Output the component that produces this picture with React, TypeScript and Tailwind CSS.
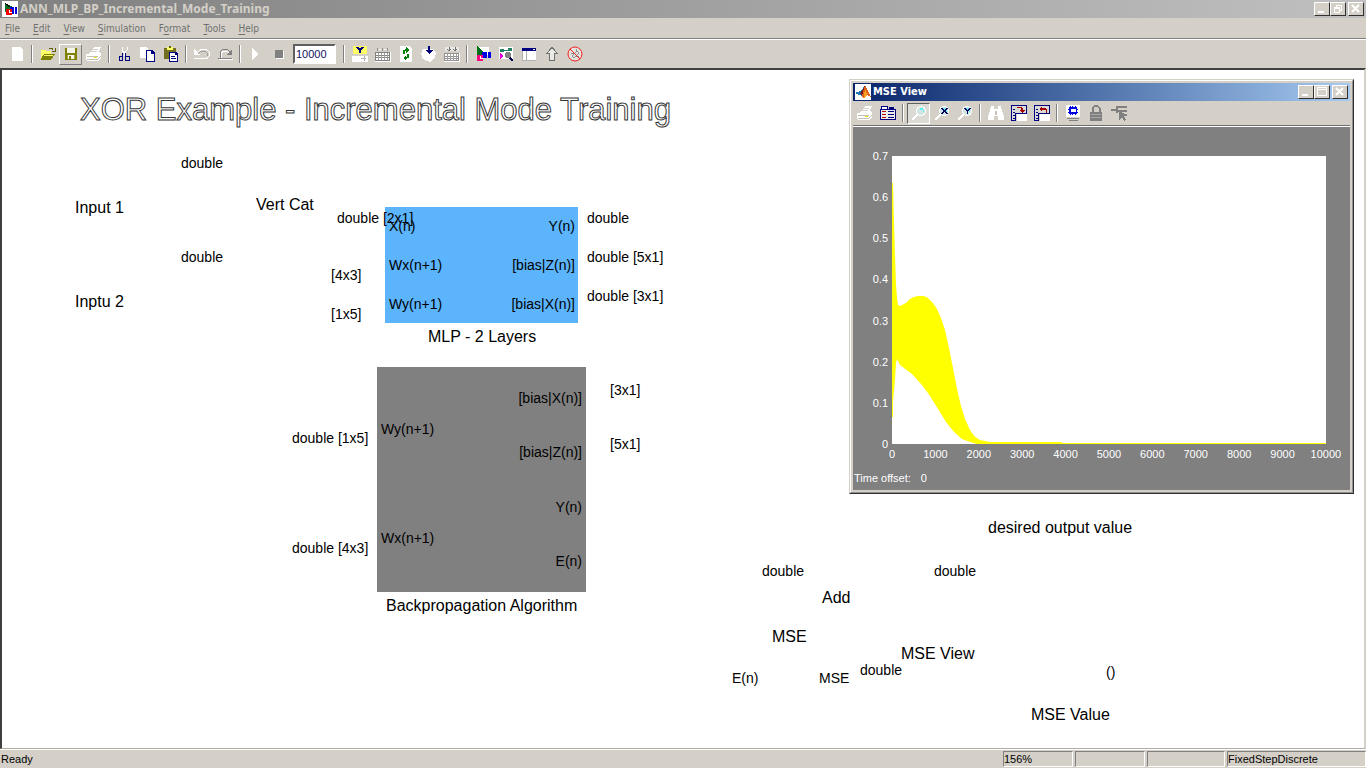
import React from "react";

type Glyph = { label: string; art: React.ReactNode; box?: string };

const plain = "border-transparent";
const raised = "border-t-white border-l-white border-r-[#808080] border-b-[#808080]";
const pressed = "border-t-[#606060] border-l-[#606060] border-r-white border-b-white bg-[#dcdad4]";

function Pix({ children }: { children: React.ReactNode }) {
  return (
    <svg viewBox="0 0 16 16" className="block h-4 w-4 shrink-0" shapeRendering="crispEdges" fill="none" aria-hidden="true">
      {children}
    </svg>
  );
}

function Tool({ label, art, box }: Glyph) {
  return (
    <button
      type="button"
      aria-label={label}
      className={"flex h-[21px] w-[23px] shrink-0 items-center justify-center border " + (box ?? plain)}
    >
      <Pix>{art}</Pix>
    </button>
  );
}

function Sep({ wide }: { wide?: boolean }) {
  return (
    <span className={"flex h-[18px] shrink-0 justify-center " + (wide ? "w-3 pl-1" : "w-2")}>
      <span className="w-px bg-[#808080]" />
      <span className="w-px bg-white" />
    </span>
  );
}

const printer = (
  <>
    <path d="M5 7l3-6h7l-3 6z" fill="#fff" />
    <path d="M7 3h5M6 5h5" stroke="#d4d0c8" />
    <path d="M0 8h3l1-2h9l2 1v5l-3 3H1l-1-2z" fill="#fff" />
    <path d="M1 10h11M1 13h11l3-3" stroke="#c4c0b8" />
    <path d="M8 11h3" stroke="#e8e800" />
  </>
);

const newPage = <path d="M3 1h8l3 3v11H3z" fill="#fff" />;
const openFolder = (
  <>
    <path d="M1 4h4l1 1h5v3H4l-3 5z" fill="#ffff66" />
    <path d="M1 13l3-5h11l-4 6H1z" fill="#808000" />
    <path d="M4 9h9" stroke="#ffff66" />
    <path d="M9 2h3l1 2M15 2v3h-3" stroke="#606000" />
  </>
);
const floppy = (
  <>
    <path d="M2 2h12v12H2z" fill="#f4f4e8" />
    <path d="M2 2h2v12H2zM12 2h2v12h-2zM4 7h8v2H4zM4 13h8v1H4zM6 10h2v3H6z" fill="#808000" />
    <path d="M4 9h1v4H4zM11 9h1v4h-1z" fill="#a8a840" />
  </>
);
const scissors = (
  <>
    <path d="M5 1v3l3 4M10 1v3L7 8" stroke="#fff" />
    <path d="M7 8h2v2H7z" fill="#fff" />
    <path d="M5 7h1v8H2v-5h3zM3 11v3h2v-3zM8 7h1v3h4v5H8zM9 11v3h3v-3z" fill="#000080" fillRule="evenodd" />
  </>
);
const copy = (
  <>
    <path d="M0 1h6l2 2v9H0z" fill="#fff" />
    <path d="M6 4h6l3 3v9H6z" fill="#000080" />
    <path d="M7 5h4v3h3v7H7z" fill="#fff" />
  </>
);
const paste = (
  <>
    <path d="M1 2h12v11H1z" fill="#707020" />
    <path d="M4 1h6v3H4z" fill="#ffff66" />
    <path d="M6 0h2v2H6z" fill="#606000" />
    <path d="M6 6h7l2 2v8H6z" fill="#000080" />
    <path d="M7 7h5v2h2v6H7z" fill="#fff" />
    <path d="M8 10h4v1H8zM8 12h5v1H8z" fill="#000080" />
  </>
);
const undo = (
  <>
    <path d="M2 8l3-3 3-2h4l3 3v4l-2 2" stroke="#fff" />
    <path d="M0 3v6h6z" fill="#fff" />
    <path d="M4 8l3-3h4l2 2v3" stroke="#a0a0a0" />
    <path d="M0 12h14v1H0z" fill="#fff" />
  </>
);
const redo = (
  <>
    <path d="M3 12V6l3-3h4l4 4" stroke="#808080" />
    <path d="M4 13V7l3-2h3l3 3" stroke="#fff" />
    <path d="M15 3v6H9z" fill="#808080" />
    <path d="M1 12h14v1H1z" fill="#808080" />
    <path d="M2 13h14v1H2z" fill="#fff" />
  </>
);
const play = <path d="M4 2l7 6-7 6z" fill="#fff" />;
const stop = (
  <>
    <path d="M5 5h8v8H5z" fill="#fff" />
    <path d="M4 4h8v8H4z" fill="#808080" />
  </>
);
const branchY = (
  <>
    <path d="M1 0h14v8H1z" fill="#ffff66" />
    <path d="M4 1h3v1h2V1h3v1h-1v1h-1v1H9v3H7V4H6V3H5V2H4z" fill="#000080" />
    <path d="M0 10h16v6H0z" fill="#fff" />
    <path d="M9 12h5v1H9zM12 10h1v5h-1z" fill="#b0b0b0" />
  </>
);
const grid = (
  <>
    <path d="M0 6h16v10H0z" fill="#fff" />
    <path d="M0 6h15v1H0zM0 9h15v1H0zM0 11h15v1H0zM0 14h15v1H0zM0 6h1v9H0zM14 6h1v9h-1z" fill="#808080" />
    <path d="M3 7h1v7H3zM6 7h1v7H6zM9 7h1v7H9zM12 7h1v7h-1z" fill="#a0a0a0" />
    <path d="M2 2h1v3H2zM7 2h1v3H7zM12 2h1v3h-1z" fill="#909090" />
    <path d="M4 3h2v1H4zM9 3h2v1H9z" fill="#fff" />
  </>
);
const refresh = (
  <>
    <path d="M2 0h9l3 3v13H2z" fill="#fff" />
    <path d="M5 4h2v4H5zM7 3h2v2H7zM9 8h2v4H9zM7 11h2v2H7z" fill="#008000" />
    <path d="M8 1l3 3-3 3zM8 9l-3 3 3 3z" fill="#008000" />
  </>
);
const download = (
  <>
    <path d="M2 3h9l4 4-1 5-5 4-7-3-2-5z" fill="#fff" />
    <path d="M7 0h2v5H7z" fill="#000080" />
    <path d="M4 4h8l-4 4z" fill="#000080" />
  </>
);
const gridDown = (
  <>
    <path d="M1 1h14v4H1z" fill="#e8e8e4" />
    <path d="M5 1v4M11 1v4M3 3l2 2 2-2M9 3l2 2 2-2" stroke="#707070" />
    <path d="M0 7h16v9H0z" fill="#fff" />
    <path d="M0 7h15v1H0zM0 10h15v1H0zM0 12h15v1H0zM0 14h15v1H0zM0 7h1v8H0zM14 7h1v8h-1z" fill="#909090" />
    <path d="M3 8h1v7H3zM6 8h1v7H6zM9 8h1v7H9zM12 8h1v7h-1z" fill="#a0a0a0" />
  </>
);
const library = (
  <>
    <path d="M4 1h10v8H4z" fill="#fff" />
    <path d="M2 0l7 6-4 4H2z" fill="#006820" />
    <path d="M2 0h1v9H2z" fill="#008000" />
    <path d="M7 6h5v6H7zM13 6h3v6h-3z" fill="#0000e0" />
    <circle cx="5" cy="12" r="3.500" fill="#ff0080" />
    <path d="M5 10h1v2h2v1H5z" fill="#fff" />
  </>
);
const explorer = (
  <>
    <path d="M1 1h14v12H1z" fill="#fff" />
    <path d="M2 3h4v3H2zM6 4h5v1H6zM10 2h4v3h-4z" fill="#208060" />
    <path d="M2 7l4 3-4 3z" fill="#e000e0" />
    <circle cx="10" cy="9" r="3" fill="#808080" />
    <path d="M12 12l3 3" stroke="#000050" strokeWidth="2" />
  </>
);
const windowIcon = (
  <>
    <path d="M1 2h14v13H1z" fill="#fff" />
    <path d="M1 2h14v3H1z" fill="#000080" />
    <path d="M1 5h1v10H1zM5 5h1v10H5zM1 14h14v1H1z" fill="#b0b0b0" />
    <path d="M12 3h2v1h-2z" fill="#fff" />
  </>
);
const upArrow = <path d="M8 1.500l5.500 6h-3v7h-5v-7h-3z" fill="#e8e8e4" stroke="#707070" />;
const bug = (
  <>
    <circle cx="8" cy="8" r="7" fill="#e4e2dc" stroke="#f02020" shapeRendering="auto" />
    <path d="M5 10l5-5 2 2-5 5zM4 7h3M9 11l3-1M9 3v3" stroke="#909090" />
    <path d="M3 3l10 10" stroke="#f02020" shapeRendering="auto" />
  </>
);

const modelLogo = (
  <>
    <path d="M0 0h16v16H0z" fill="#fff" />
    <path d="M3 2v9h3l5-5z" fill="#007020" />
    <path d="M3 2l6 5" stroke="#101010" />
    <path d="M8 6h4v7H8zM13 6h2v7h-2z" fill="#0000e0" />
    <circle cx="7" cy="11" r="3.500" fill="#f00000" />
    <path d="M7 9h1v2h2v1H7z" fill="#fff" />
  </>
);
const matlabLogo = (
  <>
    <path d="M0 0h16v16H0z" fill="#fff" />
    <path d="M0 9l5-2 3-3 2-3-3 11-3-1z" fill="#2878b8" />
    <path d="M10 1l2 4 4 8-4-2-3 4-2-3z" fill="#e06018" />
    <path d="M10 1l-3 11-2-2 3-5z" fill="#702018" />
    <path d="M11 5l1 6-3 4V9z" fill="#f8a020" />
  </>
);

const params = (
  <>
    <path d="M1 1h7v3H1zM9 2h5v2H9z" fill="#000080" />
    <path d="M2 2h5v2H2z" fill="#fff" />
    <path d="M0 4h16v11H0z" fill="#000080" />
    <path d="M1 5h14v9H1z" fill="#ecebe6" />
    <path d="M2 6h4v1H2zM2 9h4v1H2zM2 12h4v1H2z" fill="#c00000" />
    <path d="M8 6h6v1H8zM8 9h6v1H8zM8 12h6v1H8z" fill="#000080" />
  </>
);
function lens(mark?: React.ReactNode) {
  return (
    <>
      <circle cx="10" cy="6" r="4.500" fill="#cfe6e2" stroke="#fff" />
      <path d="M9 3h3v2h1v2h-1V5H9z" fill="#60f0f0" />
      <path d="M7 9l-6 6" stroke="#fff" strokeWidth="2" />
      {mark}
    </>
  );
}
const binoculars = (
  <>
    <path d="M3 1h3v3h4V1h3l1 5 2 5v4h-6v-4H6v4H0v-4l2-5z" fill="#fff" />
    <path d="M7 6h2v4H7z" fill="#c8c4bc" />
  </>
);
function axes(arrow: React.ReactNode) {
  return (
    <>
      <path d="M0 0h16v9H5v7H0z" fill="#000080" />
      <path d="M1 1h14v7H4v7H1z" fill="#dcdad4" />
      <path d="M2 4h2v1H2zM2 7h2v1H2zM2 10h2v1H2zM2 13h2v1H2z" fill="#000080" />
      <path d="M6 9h10v7H6z" fill="#fff" />
      {arrow}
    </>
  );
}
const floating = (
  <>
    <path d="M1 0h14v12H1z" fill="#fff" />
    <path d="M4 2h8v7H4zM5 1h1v9H5zM7 1h1v9H7zM10 1h1v9h-1zM3 4h10v1H3zM3 7h10v1H3z" fill="#0000e0" />
    <path d="M6 4h5v3H6z" fill="#fff" />
    <path d="M2 13h12v1H2zM4 15h9v1H4z" fill="#808080" />
  </>
);
const lock = (
  <>
    <path d="M4.500 7V3l2-2h3l2 2v4" stroke="#808080" strokeWidth="2" />
    <path d="M2 7h12v9H2z" fill="#808080" />
    <path d="M3 9h10v1H3zM3 12h10v1H3z" fill="#a8a8a8" />
  </>
);
const picker = (
  <>
    <path d="M0 5h5M5 2h11M6 6h10M9 10h7M6 1v7" stroke="#808080" strokeWidth="2" />
    <path d="M8 5v10l3-3 2 4 2-1-2-4h3z" fill="#808080" />
  </>
);

const fileTools: Glyph[] = [
  { label: "Open", art: openFolder },
  { label: "Save", art: floppy, box: raised },
  { label: "Print", art: printer },
];
const editTools: Glyph[] = [
  { label: "Cut", art: scissors },
  { label: "Copy", art: copy },
  { label: "Paste", art: paste },
];
const buildTools: Glyph[] = [
  { label: "Normal mode", art: branchY },
  { label: "Build all", art: grid },
  { label: "Refresh blocks", art: refresh },
  { label: "Update diagram", art: download },
  { label: "Build subsystem", art: gridDown },
];
const viewTools: Glyph[] = [
  { label: "Library browser", art: library },
  { label: "Model explorer", art: explorer },
  { label: "Model browser", art: windowIcon },
  { label: "Parent system", art: upArrow },
  { label: "Debug", art: bug },
];

const menus = ["File", "Edit", "View", "Simulation", "Format", "Tools", "Help"];
const menuUnderline = [0, 0, 0, 0, 1, 0, 0];

function Caption({ kind }: { kind: "min" | "restore" | "max" | "close" }) {
  return (
    <button
      type="button"
      aria-label={kind}
      className="flex h-3.5 w-4 items-center justify-center border border-t-white border-l-white border-r-[#303030] border-b-[#303030] bg-[#d4d0c8]"
    >
      <svg viewBox="0 0 12 12" className="h-3 w-3" fill="none" stroke="#fff" shapeRendering="crispEdges" aria-hidden="true">
        {kind === "min" && <path d="M2 9h6" strokeWidth="2" />}
        {kind === "restore" && <path d="M4.500 4V2.500h5v5H8M2.500 4.500h5v5h-5zM2 5h6M4 2h6" />}
        {kind === "max" && <path d="M1.500 1.500h9v8h-9zM1 3h10" />}
        {kind === "close" && <path d="M2 2l7 7M9 2l-7 7" strokeWidth="2" shapeRendering="auto" />}
      </svg>
    </button>
  );
}

type Label = { text: string; x: number; y: number; name?: boolean };

const labels: Label[] = [
  { text: "double", x: 181, y: 93 },
  { text: "double", x: 181, y: 187 },
  { text: "Input 1", x: 75, y: 138, name: true },
  { text: "Inptu 2", x: 75, y: 232, name: true },
  { text: "Vert Cat", x: 256, y: 135, name: true },
  { text: "[4x3]", x: 331, y: 205 },
  { text: "[1x5]", x: 331, y: 244 },
  { text: "double", x: 587, y: 148 },
  { text: "double [5x1]", x: 587, y: 187 },
  { text: "double [3x1]", x: 587, y: 226 },
  { text: "MLP - 2 Layers", x: 428, y: 267, name: true },
  { text: "[3x1]", x: 610, y: 320 },
  { text: "[5x1]", x: 610, y: 374 },
  { text: "double [1x5]", x: 292, y: 368 },
  { text: "double [4x3]", x: 292, y: 478 },
  { text: "Backpropagation Algorithm", x: 386, y: 536, name: true },
  { text: "desired output value", x: 988, y: 458, name: true },
  { text: "double", x: 762, y: 501 },
  { text: "double", x: 934, y: 501 },
  { text: "Add", x: 822, y: 528, name: true },
  { text: "MSE", x: 772, y: 567, name: true },
  { text: "MSE View", x: 901, y: 584, name: true },
  { text: "double", x: 860, y: 600 },
  { text: "E(n)", x: 732, y: 608 },
  { text: "MSE", x: 819, y: 608 },
  { text: "()", x: 1106, y: 602 },
  { text: "MSE Value", x: 1031, y: 645, name: true },
];

const yTicks = ["0.7", "0.6", "0.5", "0.4", "0.3", "0.2", "0.1", "0"];
const xTicks = ["0", "1000", "2000", "3000", "4000", "5000", "6000", "7000", "8000", "9000", "10000"];

function ScopeWindow() {
  return (
    <section className="absolute top-[9px] left-[849px] flex h-[415px] w-[505px] flex-col border border-t-[#d4d0c8] border-l-[#d4d0c8] border-r-[#303030] border-b-[#303030] bg-[#d4d0c8]">
      <div className="flex flex-1 flex-col border border-t-white border-l-white border-r-[#909090] border-b-[#909090] p-[2px]">
        <header className="flex h-[18px] shrink-0 items-center gap-[2px] bg-linear-to-r from-[#0a246a] to-[#a6caf0] px-[2px]">
          <Pix>{matlabLogo}</Pix>
          <h2 className="flex-1 font-['DejaVu_Sans_Condensed','DejaVu_Sans',sans-serif] text-[11px] leading-4 font-bold text-white">MSE View</h2>
          <div className="flex">
            <Caption kind="min" />
            <Caption kind="max" />
          </div>
          <Caption kind="close" />
        </header>
        <div className="flex h-[25px] shrink-0 items-center border-b border-[#707070]">
          <Tool label="Print" art={printer} />
          <Tool label="Parameters" art={params} />
          <Sep />
          <Tool label="Zoom" art={lens()} box={pressed} />
          <Tool label="Zoom X" art={lens(<path d="M7 3h2v1h1v1h1V4h1V3h2v1h-1v1h-1v2h1v1h1v1h-2V8h-1V7h-1v1H9v1H7V8h1V7h1V5H8V4H7z" fill="#000060" />)} />
          <Tool label="Zoom Y" art={lens(<path d="M7 3h2v1h1v1h1V4h1V3h2v1h-1v1h-1v1h-1v3h-1V6H9V5H8V4H7z" fill="#000060" />)} />
          <Sep />
          <Tool label="Autoscale" art={binoculars} />
          <Tool label="Save axes" art={axes(<path d="M6 2h5v1h1v2h2l-3 3-2-3h1V3H6z" fill="#a00000" />)} />
          <Tool label="Restore axes" art={axes(<path d="M5 4l3-3v2h4v1h1v4h-1V5H8v2z" fill="#a00000" />)} />
          <Sep />
          <Tool label="Floating scope" art={floating} />
          <Tool label="Lock axes" art={lock} />
          <Tool label="Signal selection" art={picker} />
        </div>
        <div className="flex flex-1 flex-col justify-between border-t border-white bg-[#808080] pt-[23px] text-[11px] leading-3 text-white">
          <div className="grid grid-cols-[35px_1fr] gap-x-1 pt-[6px] pr-6">
            <div className="-my-[6px] flex flex-col justify-between text-right">
              {yTicks.map((t) => (
                <span key={t}>{t}</span>
              ))}
            </div>
            <svg viewBox="0 0 434 288" preserveAspectRatio="none" className="block h-[288px] w-full bg-white" role="img" aria-label="Mean squared error">
              <path
                d="M0 27H1L2 65L3 100L4 128L5 142L6 149L8 150L10 149L14 147L18 143L22 141L26 140L32 140L36 142L41 147L45 153L49 162L53 174L57 192L61 212L65 233L69 250L73 263L78 274L83 281L88 284L98 286H170V287H434V288H85L78 286L70 283L62 276L54 266L46 253L38 240L30 229L20 218L12 212L8 209L5 203L4 207L3 223L1 246V261H0Z"
                fill="#ffff00"
              />
            </svg>
            <span />
            <div className="flex justify-between pt-1">
              {xTicks.map((t) => (
                <span key={t} className="flex w-0 justify-center">
                  {t}
                </span>
              ))}
            </div>
          </div>
          <div className="flex gap-[10px] pb-[6px] pl-px">
            <span>Time offset:</span>
            <span>0</span>
          </div>
        </div>
      </div>
    </section>
  );
}

function StatusCell({ width, children }: { width: string; children?: React.ReactNode }) {
  return (
    <span className={"h-4 border border-t-[#808080] border-l-[#808080] border-r-white border-b-white leading-[15px] " + width}>
      {children}
    </span>
  );
}

export default function App() {
  return (
    <div className="flex h-screen flex-col overflow-hidden bg-[#d4d0c8] font-['Liberation_Sans',Arial,sans-serif] text-black">
      <header className="flex h-[18px] shrink-0 items-center gap-[2px] bg-linear-to-r from-[#808080] to-[#c0c0c0] px-[2px]">
        <Pix>{modelLogo}</Pix>
        <h1 className="flex-1 font-['Noto_Sans','DejaVu_Sans',sans-serif] text-[12px] leading-4 font-bold text-[#d4d0c8]">
          ANN_MLP_BP_Incremental_Mode_Training
        </h1>
        <div className="flex">
          <Caption kind="min" />
          <Caption kind="restore" />
        </div>
        <Caption kind="close" />
      </header>

      <nav className="flex h-[21px] shrink-0 items-center gap-[13px] border-b border-[#808080] pl-[5px] font-['DejaVu_Sans_Condensed','DejaVu_Sans',sans-serif] text-[10px] text-[#707070]">
        {menus.map((m, i) => (
          <button type="button" key={m}>
            {m.slice(0, menuUnderline[i])}
            <span className="underline underline-offset-2">{m[menuUnderline[i]]}</span>
            {m.slice(menuUnderline[i] + 1)}
          </button>
        ))}
      </nav>

      <div className="flex h-[29px] shrink-0 items-center border-t border-white pl-[5px]">
        <Tool label="New" art={newPage} />
        <Sep />
        {fileTools.map((t) => (
          <Tool key={t.label} {...t} />
        ))}
        <Sep />
        {editTools.map((t) => (
          <Tool key={t.label} {...t} />
        ))}
        <Sep />
        <Tool label="Undo" art={undo} />
        <Tool label="Redo" art={redo} />
        <Sep />
        <Tool label="Start simulation" art={play} />
        <Tool label="Stop simulation" art={stop} />
        <input
          aria-label="Stop time"
          defaultValue="10000"
          className="ml-[3px] h-5 w-[43px] border-2 border-t-[#606060] border-l-[#606060] border-r-white border-b-white bg-white px-px text-[11px] text-[#101060]"
        />
        <Sep wide />
        {buildTools.map((t) => (
          <Tool key={t.label} {...t} />
        ))}
        <Sep />
        {viewTools.map((t) => (
          <Tool key={t.label} {...t} />
        ))}
      </div>

      <main className="relative flex-1 border-t-2 border-r-2 border-b border-l-2 border-t-[#404040] border-r-[#d4d0c8] border-b-[#b0aca4] border-l-[#404040] bg-white">
        <div className="absolute top-0 -left-[2px]">
          <h2 className="absolute top-[22px] left-[80px] text-[31px] leading-9 whitespace-nowrap text-white [-webkit-text-stroke:1px_#383838]">
            XOR Example - Incremental Mode Training
          </h2>

          <div className="absolute top-[137px] left-[385px] flex h-[116px] w-[193px] justify-between bg-[#5cb4fc] pr-[3px] pl-1 text-sm leading-4">
            <div className="grid grid-rows-3 items-center">
              <span>X(n)</span>
              <span>Wx(n+1)</span>
              <span>Wy(n+1)</span>
            </div>
            <div className="grid grid-rows-3 items-center text-right">
              <span>Y(n)</span>
              <span>[bias|Z(n)]</span>
              <span>[bias|X(n)]</span>
            </div>
          </div>
          <span className="absolute top-[140px] left-[337px] text-sm leading-4 whitespace-nowrap">double [2x1]</span>

          <div className="absolute top-[297px] left-[377px] flex h-[225px] w-[209px] justify-between bg-[#808080] px-1 text-sm leading-4">
            <div className="grid grid-rows-2 items-center pt-2">
              <span>Wy(n+1)</span>
              <span>Wx(n+1)</span>
            </div>
            <div className="grid grid-rows-4 items-center py-1 text-right">
              <span>[bias|X(n)]</span>
              <span>[bias|Z(n)]</span>
              <span>Y(n)</span>
              <span>E(n)</span>
            </div>
          </div>

          {labels.map((l) => (
            <span
              key={l.text + l.x + l.y}
              className={"absolute -translate-y-1/2 whitespace-nowrap " + (l.name ? "text-base leading-5" : "text-sm leading-4")}
              style={{ left: l.x, top: l.y }}
            >
              {l.text}
            </span>
          ))}

          <ScopeWindow />
        </div>
      </main>

      <footer className="flex h-[19px] shrink-0 items-center gap-[2px] border-t border-white text-[11px] leading-4">
        <span className="flex-1 pl-px">Ready</span>
        <StatusCell width="w-[70px]">156%</StatusCell>
        <StatusCell width="w-[70px]" />
        <StatusCell width="w-[78px]" />
        <StatusCell width="w-[139px]">FixedStepDiscrete</StatusCell>
      </footer>
    </div>
  );
}
